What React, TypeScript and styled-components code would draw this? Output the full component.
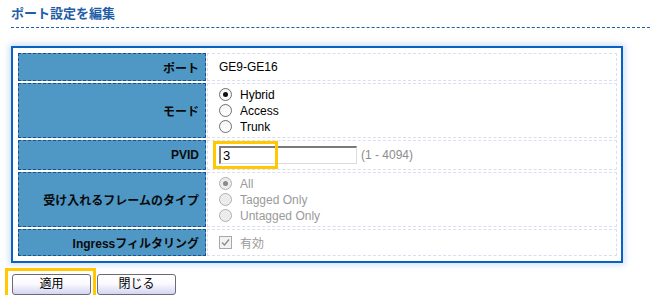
import React from "react";
import styled, { createGlobalStyle } from "styled-components";

const Global = createGlobalStyle`
  html, body { margin: 0; padding: 0; background: #fff; }
  body { font-family: "Liberation Sans", Arial, "Noto Sans CJK JP", sans-serif; font-size: 12px; color: #000; }
`;

const Page = styled.div`
  padding: 0 0 0 10px;
  width: 640px;
`;

const Title = styled.h1`
  margin: 0 0 0 1px;
  padding: 5px 0 4px 0;
  font-size: 13px;
  line-height: 18px;
  font-weight: bold;
  color: #1f5ea6;
  border-bottom: 1px dashed #1f5ea6;
  font-family: "Liberation Sans", Arial, "Noto Sans CJK JP", sans-serif;
`;

const Panel = styled.div`
  margin: 18px 0 0 1px;
  width: 612px;
  box-sizing: border-box;
  border: 2px solid #0862c4;
  padding: 5px;
  background: #fff;
  box-shadow: 0 0 6px 2px rgba(40, 110, 200, 0.22);
`;

const Grid = styled.div`
  display: grid;
  grid-template-columns: 188px 410px;
  gap: 2px 1px;
`;

const Label = styled.div`
  box-sizing: border-box;
  background: #4f98c6;
  border: 1px dashed #1c4f92;
  display: flex;
  align-items: center;
  justify-content: flex-end;
  padding-right: 6px;
  font-weight: bold;
  font-size: 12px;
  color: #0a0a0a;
`;

const Value = styled.div<{ $h: number }>`
  position: relative;
  box-sizing: border-box;
  height: ${(p) => p.$h}px;
  border: 1px dashed #dcdcf2;
  padding: 0 11px;
  display: flex;
  flex-direction: column;
  justify-content: center;
  font-size: 12px;
`;

const InlineRow = styled.div`
  display: flex;
  align-items: center;
  gap: 4px;
`;

const Option = styled.label<{ $disabled?: boolean }>`
  display: flex;
  align-items: center;
  height: 16px;
  gap: 8px;
  color: ${(p) => (p.$disabled ? "#9a9a9a" : "#000")};
`;

const RadioDot = styled.span<{ $checked?: boolean; $disabled?: boolean }>`
  width: 13px;
  height: 13px;
  box-sizing: border-box;
  border-radius: 50%;
  border: 1px solid ${(p) => (p.$disabled ? "#b0b0b0" : "#6e6e6e")};
  background: ${(p) => (p.$disabled ? "#ececec" : "linear-gradient(#f4f4f4, #fff)")};
  display: flex;
  align-items: center;
  justify-content: center;
  &::after {
    content: "";
    display: ${(p) => (p.$checked ? "block" : "none")};
    width: 5px;
    height: 5px;
    border-radius: 50%;
    background: ${(p) => (p.$disabled ? "#8a8a8a" : "#111")};
  }
`;

const CheckBox = styled.span`
  width: 13px;
  height: 13px;
  box-sizing: border-box;
  border: 1px solid #a8a8a8;
  background: #f2f2f2;
  display: flex;
  align-items: center;
  justify-content: center;
`;

const TextInput = styled.div`
  width: 138px;
  height: 18px;
  box-sizing: border-box;
  border-top: 2px solid #7a7a7a;
  border-left: 2px solid #7a7a7a;
  border-right: 1px solid #dcdcdc;
  border-bottom: 1px solid #dcdcdc;
  padding-left: 2px;
  font-size: 13px;
  line-height: 15px;
  color: #000;
  background: #fff;
`;

const Hint = styled.span`
  color: #8c8c8c;
  font-size: 12px;
`;

const Highlight = styled.div<{ $l: number; $t: number; $w: number; $hh: number }>`
  position: absolute;
  left: ${(p) => p.$l}px;
  top: ${(p) => p.$t}px;
  width: ${(p) => p.$w}px;
  height: ${(p) => p.$hh}px;
  box-sizing: border-box;
  border: 3px solid #ffc800;
  pointer-events: none;
`;

const ButtonBar = styled.div`
  display: flex;
  gap: 6px;
  margin: 11px 0 0 2px;
`;

const ButtonWrap = styled.div`
  position: relative;
`;

const Button = styled.button`
  width: 79px;
  height: 21px;
  box-sizing: border-box;
  border: 1px solid #6a6a78;
  border-radius: 3px;
  background: linear-gradient(#ffffff 0%, #fbfbff 45%, #d4d4f2 100%);
  font-family: "Liberation Sans", Arial, "Noto Sans CJK JP", sans-serif;
  font-size: 12px;
  color: #000;
  padding: 0;
  line-height: 19px;
`;

type Opt = { label: string; checked?: boolean };

const RadioGroup: React.FC<{ options: Opt[]; disabled?: boolean }> = ({ options, disabled }) => (
  <>
    {options.map((o) => (
      <Option key={o.label} $disabled={disabled}>
        <RadioDot $checked={o.checked} $disabled={disabled} />
        {o.label}
      </Option>
    ))}
  </>
);

export default function App() {
  return (
    <>
      <Global />
      <Page>
        <Title>ポート設定を編集</Title>
        <Panel>
          <Grid>
            <Label>ポート</Label>
            <Value $h={28}>GE9-GE16</Value>

            <Label>モード</Label>
            <Value $h={55}>
              <RadioGroup
                options={[
                  { label: "Hybrid", checked: true },
                  { label: "Access" },
                  { label: "Trunk" },
                ]}
              />
            </Value>

            <Label>PVID</Label>
            <Value $h={30}>
              <InlineRow>
                <TextInput>3</TextInput>
                <Hint>(1 - 4094)</Hint>
              </InlineRow>
              <Highlight $l={5} $t={0} $w={65} $hh={28} />
            </Value>

            <Label>受け入れるフレームのタイプ</Label>
            <Value $h={55}>
              <RadioGroup
                disabled
                options={[
                  { label: "All", checked: true },
                  { label: "Tagged Only" },
                  { label: "Untagged Only" },
                ]}
              />
            </Value>

            <Label>Ingressフィルタリング</Label>
            <Value $h={27}>
              <Option $disabled>
                <CheckBox>
                  <svg width="11" height="11" viewBox="0 0 11 11">
                    <path d="M2 5.5 L4.5 8 L9 2.5" fill="none" stroke="#8a8a8a" strokeWidth="1.3" />
                  </svg>
                </CheckBox>
                有効
              </Option>
            </Value>
          </Grid>
        </Panel>
        <ButtonBar>
          <ButtonWrap>
            <Button>適用</Button>
            <Highlight $l={-7} $t={-6} $w={91} $hh={34} />
          </ButtonWrap>
          <ButtonWrap>
            <Button>閉じる</Button>
          </ButtonWrap>
        </ButtonBar>
      </Page>
    </>
  );
}
